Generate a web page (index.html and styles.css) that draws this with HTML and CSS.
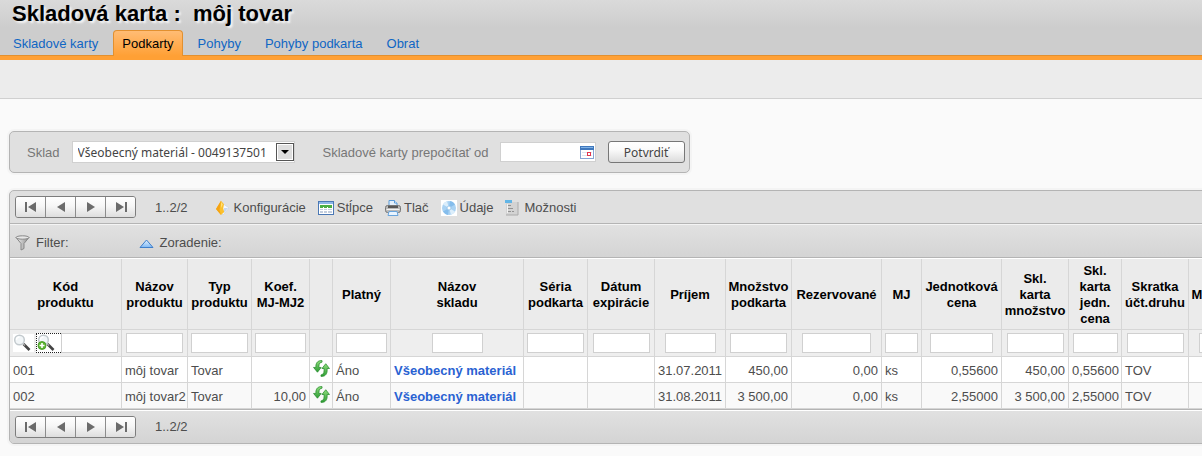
FILE: index.html
```
<!DOCTYPE html>
<html lang="sk">
<head>
  <meta charset="UTF-8" />
  <meta name="viewport" content="width=device-width, initial-scale=1.0"/>
  <title>Skladová karta : môj tovar</title>
  <link rel="stylesheet" href="styles.css">
</head>
<body>

  <!-- shared icons -->
  <svg class="defs" width="0" height="0" aria-hidden="true">
    <defs>
      <linearGradient id="gGreen" x1="0" y1="0" x2="0" y2="1">
        <stop offset="0" stop-color="#8fdd7d"/><stop offset="1" stop-color="#2c9c33"/>
      </linearGradient>
      <linearGradient id="gBlue" x1="0" y1="0" x2="0" y2="1">
        <stop offset="0" stop-color="#e4f2ff"/><stop offset="1" stop-color="#7db8f4"/>
      </linearGradient>
      <linearGradient id="gGrey" x1="0" y1="0" x2="1" y2="0">
        <stop offset="0" stop-color="#f4f4f4"/><stop offset="1" stop-color="#8a8a8a"/>
      </linearGradient>
    </defs>
    <symbol id="first" viewBox="0 0 12 10"><path d="M0 0h2v10H0zM11 0v10L3 5z"/></symbol>
    <symbol id="prev" viewBox="0 0 12 10"><path d="M10 0v10L2 5z"/></symbol>
    <symbol id="next" viewBox="0 0 12 10"><path d="M2 0v10l8-5z"/></symbol>
    <symbol id="last" viewBox="0 0 12 10"><path d="M10 0h2v10h-2zM1 0v10l8-5z"/></symbol>
    <symbol id="glass" viewBox="0 0 18 18">
      <path d="M10.500 10l6 6" stroke="#444" stroke-width="2.600"/>
      <path d="M10 9.500l2 2" stroke="#aaa" stroke-width="1.500"/>
      <circle cx="6.500" cy="6" r="4.800" fill="#f2f6f8" stroke="#c3cace" stroke-width="1.500"/>
      <path d="M3.500 6a3 3 0 0 1 3-3" fill="none" stroke="#fff" stroke-width="1.300"/>
    </symbol>
    <symbol id="refresh" viewBox="0 0 16 16">
      <path d="M8.500.6C5.200.2 2.800 2.200 2.700 5.800V7H.5l3.700 4.500L7.700 7H5.600V5.800C5.600 3.500 6.700 2.200 8.500 2z" fill="url(#gGreen)" stroke="#258a2b" stroke-width=".7"/>
      <path d="M7.500 15.400c3.300.4 5.700-1.600 5.800-5.200V8h2.200L12 3.500 8.400 8h2v2.200c0 2.300-1.100 3.600-2.900 3.800z" fill="url(#gGreen)" stroke="#258a2b" stroke-width=".7"/>
    </symbol>
  </svg>

  <header class="head">
    <h1>Skladová karta :&nbsp; môj tovar</h1>
    <nav class="tabs">
      <a href="#">Skladové karty</a>
      <a href="#" class="active">Podkarty</a>
      <a href="#">Pohyby</a>
      <a href="#">Pohyby podkarta</a>
      <a href="#">Obrat</a>
    </nav>
  </header>
  <div class="subbar"></div>

  <main>
    <form class="box search">
      <label for="sklad">Sklad</label>
      <span class="drop">
        <select id="sklad">
          <option>Všeobecný materiál - 0049137501</option>
        </select>
        <svg class="arrow" width="18" height="18" viewBox="0 0 18 18">
          <rect x=".5" y=".5" width="17" height="17" fill="#fff" stroke="#555"/>
          <rect x="2" y="2" width="14" height="14" fill="#dedede"/>
          <path d="M5 7h8l-4 4z" fill="#000"/>
        </svg>
      </span>
      <label for="datum" class="lbl-date">Skladové karty prepočítať od</label>
      <span class="date">
        <input type="text" id="datum">
        <svg class="cal" width="14" height="13" viewBox="0 0 14 13">
          <rect x=".5" y=".5" width="13" height="12" fill="#fff" stroke="#86a4d4"/>
          <path d="M0 0h14v4H0z" fill="#3f78bd"/>
          <path d="M1 1h12v1H1z" fill="#7fb2e6"/>
          <path d="M2 6.500h10M2 9.500h10" stroke="#dde4ef"/>
          <rect x="7.500" y="6.500" width="3" height="3" fill="#fff" stroke="#e2364f"/>
        </svg>
      </span>
      <button type="button" class="submit">Potvrdiť</button>
    </form>

    <section class="box grid">
      <div class="toolbar">
        <div class="pager">
          <button type="button" aria-label="Prvá"><svg width="12" height="10"><use href="#first"/></svg></button>
          <button type="button" aria-label="Späť"><svg width="12" height="10"><use href="#prev"/></svg></button>
          <button type="button" aria-label="Ďalej"><svg width="12" height="10"><use href="#next"/></svg></button>
          <button type="button" aria-label="Posledná"><svg width="12" height="10"><use href="#last"/></svg></button>
        </div>
        <span class="count">1..2/2</span>
        <div class="tools">
          <a href="#">
            <svg width="16" height="16" viewBox="0 0 16 16">
              <path d="M7 3l7 5-6 7-3-3z" fill="#f4f8ff" stroke="#c3cede" stroke-width=".6"/>
              <path d="M9 8h4l-4 5z" fill="#c6d6ee"/>
              <path d="M6 .8l3 3.400-.8 4 1 3.800L6 15 1 9z" fill="#fbc02d"/>
              <path d="M6 .8L1 9l5 6-1.500-5z" fill="#f5a313"/>
              <path d="M6 2l1.800 2.500L6 8z" fill="#ffe07a"/>
            </svg>Konfigurácie</a>
          <a href="#">
            <svg width="16" height="16" viewBox="0 0 16 16">
              <rect x=".5" y="1.500" width="15" height="13" fill="#fff" stroke="#4a78b5"/>
              <path d="M1 2h14v2H1z" fill="#8db7e8"/>
              <path d="M2 5h12v3H2z" fill="#4cae45"/>
              <path d="M2 9h12v4H2z" fill="#c3cede"/>
              <path d="M2 8.500h12M2 10.500h12" stroke="#fff"/>
              <path d="M5.500 7v6M9.500 7v6" stroke="#fff"/>
            </svg>Stĺpce</a>
          <a href="#">
            <svg width="16" height="16" viewBox="0 0 16 16">
              <path d="M4 6V.5h5.500L12 3v3z" fill="#e3f0fd" stroke="#5a9bd8"/>
              <path d="M9.500.5V3H12" fill="#fff" stroke="#5a9bd8"/>
              <rect x=".5" y="5.500" width="15" height="7" rx="2" fill="#b9b9b9" stroke="#777"/>
              <path d="M3 6h10v2H3z" fill="#585858"/>
              <path d="M1.500 9.500h13" stroke="#f3f3f3"/>
              <path d="M4 11.500h8l1 4H3z" fill="#e9f4ff" stroke="#6aa5dc"/>
            </svg>Tlač</a>
          <a href="#">
            <svg width="16" height="16" viewBox="0 0 16 16">
              <path d="M0 0h16v16H0z" fill="#fff"/>
              <circle cx="8" cy="8" r="7" fill="#a9d2f3"/>
              <path d="M8 8L2 4.400A7 7 0 0 1 6 1.300zM8 8l6 3.600a7 7 0 0 1-4 3.100z" fill="#dceefb"/>
              <path d="M8 8L9 1.100A7 7 0 0 1 14 4.400zM8 8l-1 6.900A7 7 0 0 1 2 11.600z" fill="#85bdec"/>
              <circle cx="8" cy="8" r="2" fill="#fff" stroke="#8fbfe6" stroke-width=".8"/>
            </svg>Údaje</a>
          <a href="#">
            <svg width="16" height="16" viewBox="0 0 16 16">
              <path d="M1 2h12v13H1z" fill="#d3d3d3"/>
              <path d="M13 2v13H1" fill="none" stroke="#aaa"/>
              <path d="M0 0h7v3H0z" fill="#62b5e6"/>
              <path d="M3 5.500h3M3 8.500h5M3 11.500h3M7 11.500h2" stroke="#929292"/>
              <path d="M2 4h1v9H2z" fill="#f2f2f2"/>
            </svg>Možnosti</a>
        </div>
      </div>

      <div class="filterbar">
        <a href="#" class="filter">
          <svg width="15" height="16" viewBox="0 0 15 16">
            <path d="M1 2.500l5 6V15l3-1.500v-5l5-6z" fill="url(#gGrey)" stroke="#888"/>
            <ellipse cx="7.500" cy="2.500" rx="6.500" ry="1.700" fill="#e6e6e6" stroke="#888"/>
          </svg>Filter:</a>
        <a href="#">
          <svg width="15" height="9" viewBox="0 0 15 9">
            <path d="M7.500 1L14 8.500H1z" fill="url(#gBlue)" stroke="#3f7fca"/>
          </svg>Zoradenie:</a>
      </div>

      <table>
        <colgroup>
          <col class="c-kod"><col class="c-nazov"><col class="c-typ"><col class="c-koef"><col class="c-icon"><col class="c-platny"><col class="c-sklad"><col class="c-seria"><col class="c-datum"><col class="c-prijem"><col class="c-mnoz"><col class="c-rez"><col class="c-mj"><col class="c-cena"><col class="c-sklmn"><col class="c-skljc"><col class="c-skratka"><col class="c-min">
        </colgroup>
        <thead>
          <tr>
            <th>Kód<br>produktu</th>
            <th>Názov<br>produktu</th>
            <th>Typ<br>produktu</th>
            <th>Koef.<br>MJ-MJ2</th>
            <th></th>
            <th>Platný</th>
            <th>Názov<br>skladu</th>
            <th>Séria<br>podkarta</th>
            <th>Dátum<br>expirácie</th>
            <th>Príjem</th>
            <th>Množstvo<br>podkarta</th>
            <th>Rezervované</th>
            <th>MJ</th>
            <th>Jednotková<br>cena</th>
            <th>Skl.<br>karta<br>množstvo</th>
            <th>Skl.<br>karta<br>jedn.<br>cena</th>
            <th>Skratka<br>účt.druhu</th>
            <th>Množstvo</th>
          </tr>
          <tr class="inputs">
            <td>
              <div class="find">
                <button type="button" class="ico" aria-label="Hľadať"><svg width="18" height="18"><use href="#glass"/></svg></button>
                <button type="button" class="ico more" aria-label="Pridať hľadanie"><svg width="18" height="18" viewBox="0 0 18 18">
                  <use href="#glass"/>
                  <circle cx="5" cy="11.500" r="4" fill="#5cb531" stroke="#3f9420" stroke-width=".8"/>
                  <path d="M5 9v5M2.500 11.500h5" stroke="#fff" stroke-width="1.600"/>
                </svg></button>
                <input type="text" class="w57" aria-label="Kód produktu">
              </div>
            </td>
            <td><input type="text" class="w57" aria-label="Názov produktu"></td>
            <td><input type="text" class="w57" aria-label="Typ produktu"></td>
            <td><input type="text" class="w51" aria-label="Koef. MJ-MJ2"></td>
            <td></td>
            <td><input type="text" class="w51" aria-label="Platný"></td>
            <td><input type="text" class="w51" aria-label="Názov skladu"></td>
            <td><input type="text" class="w57" aria-label="Séria podkarta"></td>
            <td><input type="text" class="w57" aria-label="Dátum expirácie"></td>
            <td><input type="text" class="w51" aria-label="Príjem"></td>
            <td><input type="text" class="w57" aria-label="Množstvo podkarta"></td>
            <td><input type="text" class="w69" aria-label="Rezervované"></td>
            <td><input type="text" class="w33" aria-label="MJ"></td>
            <td><input type="text" class="w63" aria-label="Jednotková cena"></td>
            <td><input type="text" class="w57" aria-label="Skl. karta množstvo"></td>
            <td><input type="text" class="w45" aria-label="Skl. karta jedn. cena"></td>
            <td><input type="text" class="w57" aria-label="Skratka účt.druhu"></td>
            <td><input type="text" class="w45" aria-label="Množstvo"></td>
          </tr>
        </thead>
        <tbody>
          <tr>
            <td>001</td>
            <td>môj tovar</td>
            <td>Tovar</td>
            <td class="num"></td>
            <td class="ref"><svg width="17" height="17"><use href="#refresh"/></svg></td>
            <td>Áno</td>
            <td><a href="#">Všeobecný materiál</a></td>
            <td></td>
            <td></td>
            <td>31.07.2011</td>
            <td class="num">450,00</td>
            <td class="num">0,00</td>
            <td>ks</td>
            <td class="num">0,55600</td>
            <td class="num">450,00</td>
            <td class="num">0,55600</td>
            <td>TOV</td>
            <td></td>
          </tr>
          <tr>
            <td>002</td>
            <td>môj tovar2</td>
            <td>Tovar</td>
            <td class="num">10,00</td>
            <td class="ref"><svg width="17" height="17"><use href="#refresh"/></svg></td>
            <td>Áno</td>
            <td><a href="#">Všeobecný materiál</a></td>
            <td></td>
            <td></td>
            <td>31.08.2011</td>
            <td class="num">3 500,00</td>
            <td class="num">0,00</td>
            <td>ks</td>
            <td class="num">2,55000</td>
            <td class="num">3 500,00</td>
            <td class="num">2,55000</td>
            <td>TOV</td>
            <td></td>
          </tr>
        </tbody>
      </table>

      <div class="toolbar bottom">
        <div class="pager">
          <button type="button" aria-label="Prvá"><svg width="12" height="10"><use href="#first"/></svg></button>
          <button type="button" aria-label="Späť"><svg width="12" height="10"><use href="#prev"/></svg></button>
          <button type="button" aria-label="Ďalej"><svg width="12" height="10"><use href="#next"/></svg></button>
          <button type="button" aria-label="Posledná"><svg width="12" height="10"><use href="#last"/></svg></button>
        </div>
        <span class="count">1..2/2</span>
      </div>
    </section>
  </main>
</body>
</html>
```
FILE: styles.css
```
* { box-sizing: border-box; }
body {
  margin: 0;
  background: #fafafa;
  color: #4d4d4d;
  font: 13px/16px "Liberation Sans", Arial, sans-serif;
  overflow-x: hidden;
}
a { color: inherit; text-decoration: none; }
svg { display: block; flex: none; }
.defs { position: absolute; }
input {
  border: 1px solid #d0d0d0;
  background: #fff;
  padding: 0 2px;
  font: inherit;
}

/* header + tabs */
.head {
  background: linear-gradient(#dadada, #cdcdcd 28px, #cdcdcd);
  border-bottom: 4px solid #ffa035;
  box-shadow: inset 0 -1px 0 #e2902f, 0 1px 0 #e2902f;
}
h1 {
  margin: 0;
  padding: 0 12px;
  font-size: 22px;
  line-height: 28px;
  color: #000;
  text-shadow: 2px 2px 2px #f4f4f4;
}
.tabs { display: flex; gap: 6px; padding: 2px 4px 0; }
.tabs a {
  padding: 0 8px;
  border: 1px solid transparent;
  border-bottom: 0;
  line-height: 25px;
  color: #0f66c4;
}
.tabs .active {
  color: #000;
  border-color: #e2902f;
  border-radius: 4px 4px 0 0;
  background: linear-gradient(#ffbc74, #ffa035);
}
.subbar {
  height: 39px;
  background: #ececec;
  border-bottom: 1px solid #d0d0d0;
}

main { padding: 32px 9px 12px; }
.box {
  border: 1px solid #b4b4b4;
  border-radius: 5px;
  background: #e0e0e0;
  box-shadow: 0 0 0 2px #f4f4f4;
  width: max-content;
}

/* search box */
.search {
  display: flex;
  align-items: center;
  height: 42px;
  padding: 0 4px 0 17px;
  margin-bottom: 17px;
  color: #777;
}
.search label { padding-top: 2px; }
.drop { position: relative; margin-left: 12px; }
.drop select {
  display: block;
  appearance: none;
  width: 223px;
  height: 22px;
  padding: 0 18px 0 5px;
  border: 1px solid #d0d0d0;
  border-radius: 0;
  background: #fff;
  color: #444;
  font: 12px "Noto Sans", sans-serif;
}
.arrow { position: absolute; right: 1px; top: 2px; pointer-events: none; }
.lbl-date { margin-left: 28px; }
.date { position: relative; margin-left: 11px; }
.date input { display: block; width: 96px; height: 20px; }
.cal { position: absolute; right: 2px; top: 4px; }
.submit {
  width: 77px;
  height: 22px;
  margin-left: 12px;
  padding: 0;
  border: 1px solid #777;
  border-radius: 3px;
  background: linear-gradient(#fff, #fafafa 40%, #dcdcdc);
  color: #444;
  font: 12px "Noto Sans", sans-serif;
}

/* grid */
.toolbar {
  display: flex;
  align-items: center;
  height: 33px;
  padding: 0 5px;
  border-bottom: 1px solid #b4b4b4;
}
.pager {
  display: flex;
  border: 1px solid #7d7d7d;
  border-radius: 3px;
  overflow: hidden;
}
.pager button {
  display: flex;
  align-items: center;
  justify-content: center;
  width: 30px;
  height: 20px;
  padding: 0;
  border: 0;
  border-right: 1px solid #8c8c8c;
  background: linear-gradient(#fff, #f6f6f6 45%, #dedede);
}
.pager button:last-child { border-right: 0; width: 29px; }
.pager svg { fill: #6b6b6b; }
.count { margin-left: 19px; padding-top: 1px; }
.tools { display: flex; gap: 12px; margin-left: 27px; padding-top: 1px; }
.tools a { display: flex; align-items: center; gap: 3px; }

.filterbar {
  display: flex;
  gap: 70px;
  height: 34px;
  padding: 0 5px;
  border-top: 1px solid #f4f4f4;
  border-bottom: 1px solid #b4b4b4;
  background: linear-gradient(#e1e1e1, #d4d4d4);
}
.filterbar a { display: flex; align-items: center; gap: 6px; height: 36px; }

table {
  table-layout: fixed;
  width: 1245px;
  border-collapse: separate;
  border-spacing: 0;
  border-top: 1px solid #fff;
}
.c-kod { width: 112px; }
.c-nazov, .c-mnoz, .c-min { width: 66px; }
.c-typ, .c-seria { width: 64px; }
.c-koef, .c-platny { width: 58px; }
.c-icon { width: 23px; }
.c-sklad { width: 133px; }
.c-datum, .c-sklmn, .c-skratka { width: 67px; }
.c-prijem { width: 71px; }
.c-rez { width: 90px; }
.c-mj { width: 40px; }
.c-cena { width: 80px; }
.c-skljc { width: 53px; }

th, td {
  border-right: 1px solid #d6d6d6;
  border-bottom: 1px solid #d6d6d6;
  white-space: nowrap;
}
th {
  height: 71px;
  padding: 1px 0 0;
  background: #ebebeb;
  color: #000;
}
td { height: 26px; padding: 2px 3px 0; background: #fff; text-align: left; }
tbody tr:nth-child(even) td { background: #f9f9f9; }
td a { color: #2a62d2; font-weight: bold; }
td.num { text-align: right; }
td.ref { padding: 0 0 3px 3px; }

.inputs td { height: 27px; padding: 0; background: #eee; text-align: center; }
.inputs input { display: block; height: 20px; margin: 0 auto; }
.w33 { width: 33px; }
.w45 { width: 45px; }
.w51 { width: 51px; }
.w57 { width: 57px; }
.w63 { width: 63px; }
.w69 { width: 69px; }
.find { display: flex; align-items: center; padding: 0 3px; }
.inputs .find .w57 { margin: 0; }
.ico {
  width: 21px;
  height: 18px;
  padding: 0;
  border: 0;
  background: #fff;
}
.ico.more {
  width: 26px;
  height: 20px;
  margin-left: 2px;
  border: 1px dotted #222;
  border-right: 0;
}

.bottom {
  height: 34px;
  border-top: 1px solid #b4b4b4;
  border-bottom: 0;
  border-radius: 0 0 4px 4px;
  box-shadow: inset 0 1px 0 #fff;
  background: linear-gradient(#e1e1e1, #d4d4d4);
}
```
